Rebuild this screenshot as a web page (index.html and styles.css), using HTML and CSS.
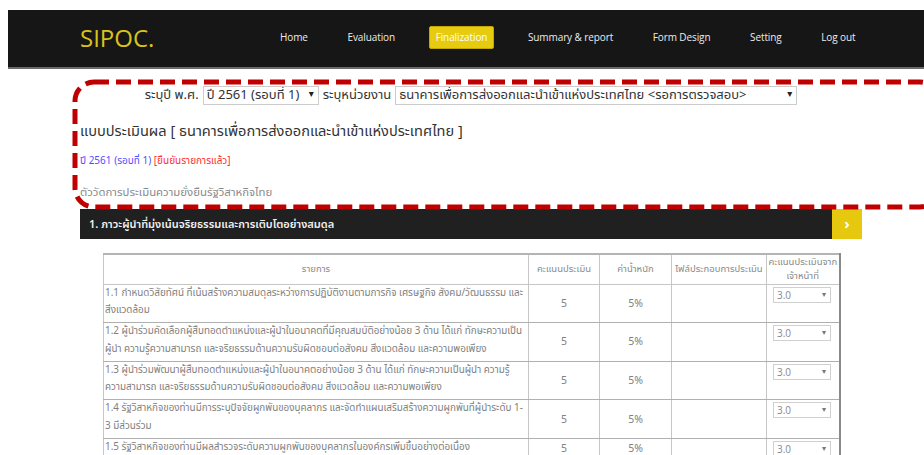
FILE: index.html
```html
<!DOCTYPE html>
<html lang="th">
<head>
<meta charset="utf-8">
<title>SIPOC. - Finalization</title>
<link rel="stylesheet" href="styles.css">
</head>
<body>
<div class="page">
  <header class="topbar">
    <div class="brand">SIPOC.</div>
    <nav class="menu">
      <a href="#">Home</a>
      <a href="#">Evaluation</a>
      <a href="#" class="active">Finalization</a>
      <a href="#">Summary &amp; report</a>
      <a href="#">Form Design</a>
      <a href="#">Setting</a>
      <a href="#">Log out</a>
    </nav>
  </header>

  <main class="content">
    <form class="filters">
      <label>ระบุปี พ.ศ.</label>
      <span class="pick year"><select><option>ปี 2561 (รอบที่ 1)</option></select></span>
      <label>ระบุหน่วยงาน</label>
      <span class="pick org"><select><option>ธนาคารเพื่อการส่งออกและนำเข้าแห่งประเทศไทย &lt;รอการตรวจสอบ&gt;</option></select></span>
    </form>

    <h2 class="title">แบบประเมินผล [ ธนาคารเพื่อการส่งออกและนำเข้าแห่งประเทศไทย ]</h2>
    <p class="status"><span class="round">ปี 2561 (รอบที่ 1)</span> <span class="confirmed">[ยืนยันรายการแล้ว]</span></p>
    <p class="caption">ตัววัดการประเมินความยั่งยืนรัฐวิสาหกิจไทย</p>

    <div class="section-bar">
      <span class="section-name">1. ภาวะผู้นำที่มุ่งเน้นจริยธรรมและการเติบโตอย่างสมดุล</span>
      <span class="section-toggle">›</span>
    </div>

    <table class="score-table">
      <colgroup>
        <col class="c-item"><col class="c-score"><col class="c-weight"><col class="c-file"><col class="c-officer">
      </colgroup>
      <thead>
        <tr>
          <th>รายการ</th>
          <th>คะแนนประเมิน</th>
          <th>ค่าน้ำหนัก</th>
          <th>ไฟล์ประกอบการประเมิน</th>
          <th>คะแนนประเมินจาก<br>เจ้าหน้าที่</th>
        </tr>
      </thead>
      <tbody>
        <tr>
          <td class="item">1.1 กำหนดวิสัยทัศน์ ที่เน้นสร้างความสมดุลระหว่างการปฏิบัติงานตามภารกิจ เศรษฐกิจ สังคม/วัฒนธรรม และ สิ่งแวดล้อม</td>
          <td class="num">5</td><td class="num">5%</td><td></td>
          <td class="officer"><span class="cell-pick"><select><option>3.0</option></select></span></td>
        </tr>
        <tr>
          <td class="item">1.2 ผู้นำร่วมคัดเลือกผู้สืบทอดตำแหน่งและผู้นำในอนาคตที่มีคุณสมบัติอย่างน้อย 3 ด้าน ได้แก่ ทักษะความเป็นผู้นำ ความรู้ความสามารถ และจริยธรรมด้านความรับผิดชอบต่อสังคม สิ่งแวดล้อม และความพอเพียง</td>
          <td class="num">5</td><td class="num">5%</td><td></td>
          <td class="officer"><span class="cell-pick"><select><option>3.0</option></select></span></td>
        </tr>
        <tr>
          <td class="item">1.3 ผู้นำร่วมพัฒนาผู้สืบทอดตำแหน่งและผู้นำในอนาคตอย่างน้อย 3 ด้าน ได้แก่ ทักษะความเป็นผู้นำ ความรู้ ความสามารถ และจริยธรรมด้านความรับผิดชอบต่อสังคม สิ่งแวดล้อม และความพอเพียง</td>
          <td class="num">5</td><td class="num">5%</td><td></td>
          <td class="officer"><span class="cell-pick"><select><option>3.0</option></select></span></td>
        </tr>
        <tr>
          <td class="item">1.4 รัฐวิสาหกิจของท่านมีการระบุปัจจัยผูกพันของบุคลากร และจัดทำแผนเสริมสร้างความผูกพันที่ผู้นำระดับ 1-3 มีส่วนร่วม</td>
          <td class="num">5</td><td class="num">5%</td><td></td>
          <td class="officer"><span class="cell-pick"><select><option>3.0</option></select></span></td>
        </tr>
        <tr>
          <td class="item">1.5 รัฐวิสาหกิจของท่านมีผลสำรวจระดับความผูกพันของบุคลากรในองค์กรเพิ่มขึ้นอย่างต่อเนื่อง</td>
          <td class="num">5</td><td class="num">5%</td><td></td>
          <td class="officer"><span class="cell-pick"><select><option>3.0</option></select></span></td>
        </tr>
      </tbody>
    </table>
  </main>

  <!-- red dashed callout drawn over the filter/heading block -->
  <svg class="callout" width="960" height="220" viewBox="0 0 960 220" aria-hidden="true">
    <rect x="75" y="82" width="864" height="125" rx="19" ry="19"
          fill="none" stroke="#c00000" stroke-width="5" stroke-dasharray="15 7"/>
  </svg>
</div>
</body>
</html>
```

FILE: styles.css
```css
* { box-sizing: border-box; }

html, body {
  margin: 0;
  background: #fff;
}

body {
  font-family: "Noto Sans Thai", Tahoma, "Noto Sans", "DejaVu Sans", sans-serif;
  color: #333;
  overflow: hidden;
}

.page {
  position: relative;
  width: 924px;
  height: 455px;
  padding: 10px 0 0 8px;
  overflow: hidden;
}

/* ---------- top navigation ---------- */
.topbar {
  display: flex;
  align-items: center;
  height: 59px;
  background: #161616;
  border-bottom: 2px solid #6a6a6a;
  margin-right: -20px;
}

.brand {
  width: 266px;
  padding-left: 72px;
  font-family: "Open Sans", sans-serif;
  font-size: 24px;
  color: #d9c31b;
  line-height: 1;
  margin-top: -2px;
}

.menu {
  display: flex;
  align-items: center;
  gap: 27.6px;
  margin-top: -3px;
}

.menu a {
  font-family: "Open Sans", sans-serif;
  font-size: 10px;
  letter-spacing: -0.1px;
  color: #ececec;
  text-decoration: none;
  padding: 3px 5px;
  line-height: 15px;
  border: 1px solid transparent;
  border-radius: 2px;
}

.menu a.active {
  background: #e6cb10;
  border-color: #c0a800;
  color: #fff;
  padding: 3px 6px;
}

/* ---------- page body ---------- */
.content {
  margin-left: 72px;
  width: 782px;
}

.filters {
  display: flex;
  justify-content: center;
  align-items: center;
  gap: 4px;
  margin: 16px 0 0;
  height: 19px;
  font-size: 13px;
}

.filters label {
  color: #333;
}

.pick {
  position: relative;
  display: inline-block;
  height: 19px;
}

.pick select {
  appearance: none;
  -webkit-appearance: none;
  height: 19px;
  border: 1px solid #ccc;
  background: #fff;
  font: inherit;
  font-size: 13px;
  color: #333;
  padding: 0 16px 0 3px;
  line-height: 17px;
  border-radius: 0;
}

.pick::after {
  content: "▾";
  position: absolute;
  right: 5px;
  top: 1px;
  font-size: 10px;
  color: #222;
  pointer-events: none;
}

.pick.year select { width: 116px; }
.pick.org select { width: 402px; }

.title {
  margin: 16px 0 0;
  font-size: 14.6px;
  font-weight: normal;
  color: #333;
  line-height: 24px;
}

.status {
  margin: 9px 0 0;
  font-size: 10px;
  line-height: 16px;
}

.status .round { color: #4f4fff; }
.status .confirmed { color: #ff2d2d; }

.caption {
  margin: 15px 0 0;
  font-size: 11.4px;
  line-height: 18px;
  color: #8a8a8a;
}

.section-bar {
  display: flex;
  align-items: stretch;
  height: 30px;
  margin-top: 7px;
  background: #202020;
}

.section-name {
  flex: 1;
  display: flex;
  align-items: center;
  padding-left: 9px;
  font-size: 11px;
  font-weight: 600;
  color: #f2f2f2;
}

.section-toggle {
  width: 30px;
  display: flex;
  align-items: center;
  justify-content: center;
  background: #e6c90f;
  color: #fff;
  font-size: 15px;
  font-weight: bold;
}

/* ---------- score table ---------- */
.score-table {
  margin: 14px 0 0 23px;
  width: 736px;
  border-collapse: collapse;
  table-layout: fixed;
  border-top: 2px solid #b4b4b4;
  border-left: 1px solid #9a9a9a;
  border-right: 2px solid #8a8a8a;
  font-size: 9.9px;
  color: #808080;
}

.c-item { width: 425px; }
.c-score { width: 71px; }
.c-weight { width: 72px; }
.c-file { width: 95px; }
.c-officer { width: 73px; }

.score-table th {
  height: 30px;
  font-weight: normal;
  font-size: 9.5px;
  line-height: 14px;
  color: #8a8a8a;
  text-align: center;
  vertical-align: middle;
  border: 1px solid #c6c6c6;
  padding: 0;
  white-space: nowrap;
}

.score-table td {
  border: 1px solid #c6c6c6;
  border-bottom-color: #b0b0b0;
  padding: 0;
}

.score-table td.item {
  vertical-align: top;
  line-height: 17.8px;
  padding: 0 0 2px 1px;
}

.score-table td.num {
  text-align: center;
  vertical-align: middle;
  font-size: 10.5px;
  line-height: 13px;
  padding-top: 2px;
}

.score-table td.officer {
  vertical-align: top;
  padding: 2px 0 2px 6px;
  line-height: 16px;
}

.cell-pick {
  position: relative;
  display: block;
  width: 58px;
  height: 16px;
}

.cell-pick select {
  display: block;
  appearance: none;
  -webkit-appearance: none;
  width: 58px;
  height: 16px;
  border: 1px solid #d0d0d0;
  background: #fff;
  font-family: "Open Sans", sans-serif;
  font-size: 10px;
  color: #888;
  padding: 0 3px;
  line-height: 14px;
  border-radius: 0;
}

.cell-pick::after {
  content: "▾";
  position: absolute;
  right: 5px;
  top: 1px;
  font-size: 8px;
  line-height: 14px;
  color: #777;
  pointer-events: none;
}

/* ---------- callout overlay ---------- */
.callout {
  position: absolute;
  left: 0;
  top: 0;
  pointer-events: none;
}
```
